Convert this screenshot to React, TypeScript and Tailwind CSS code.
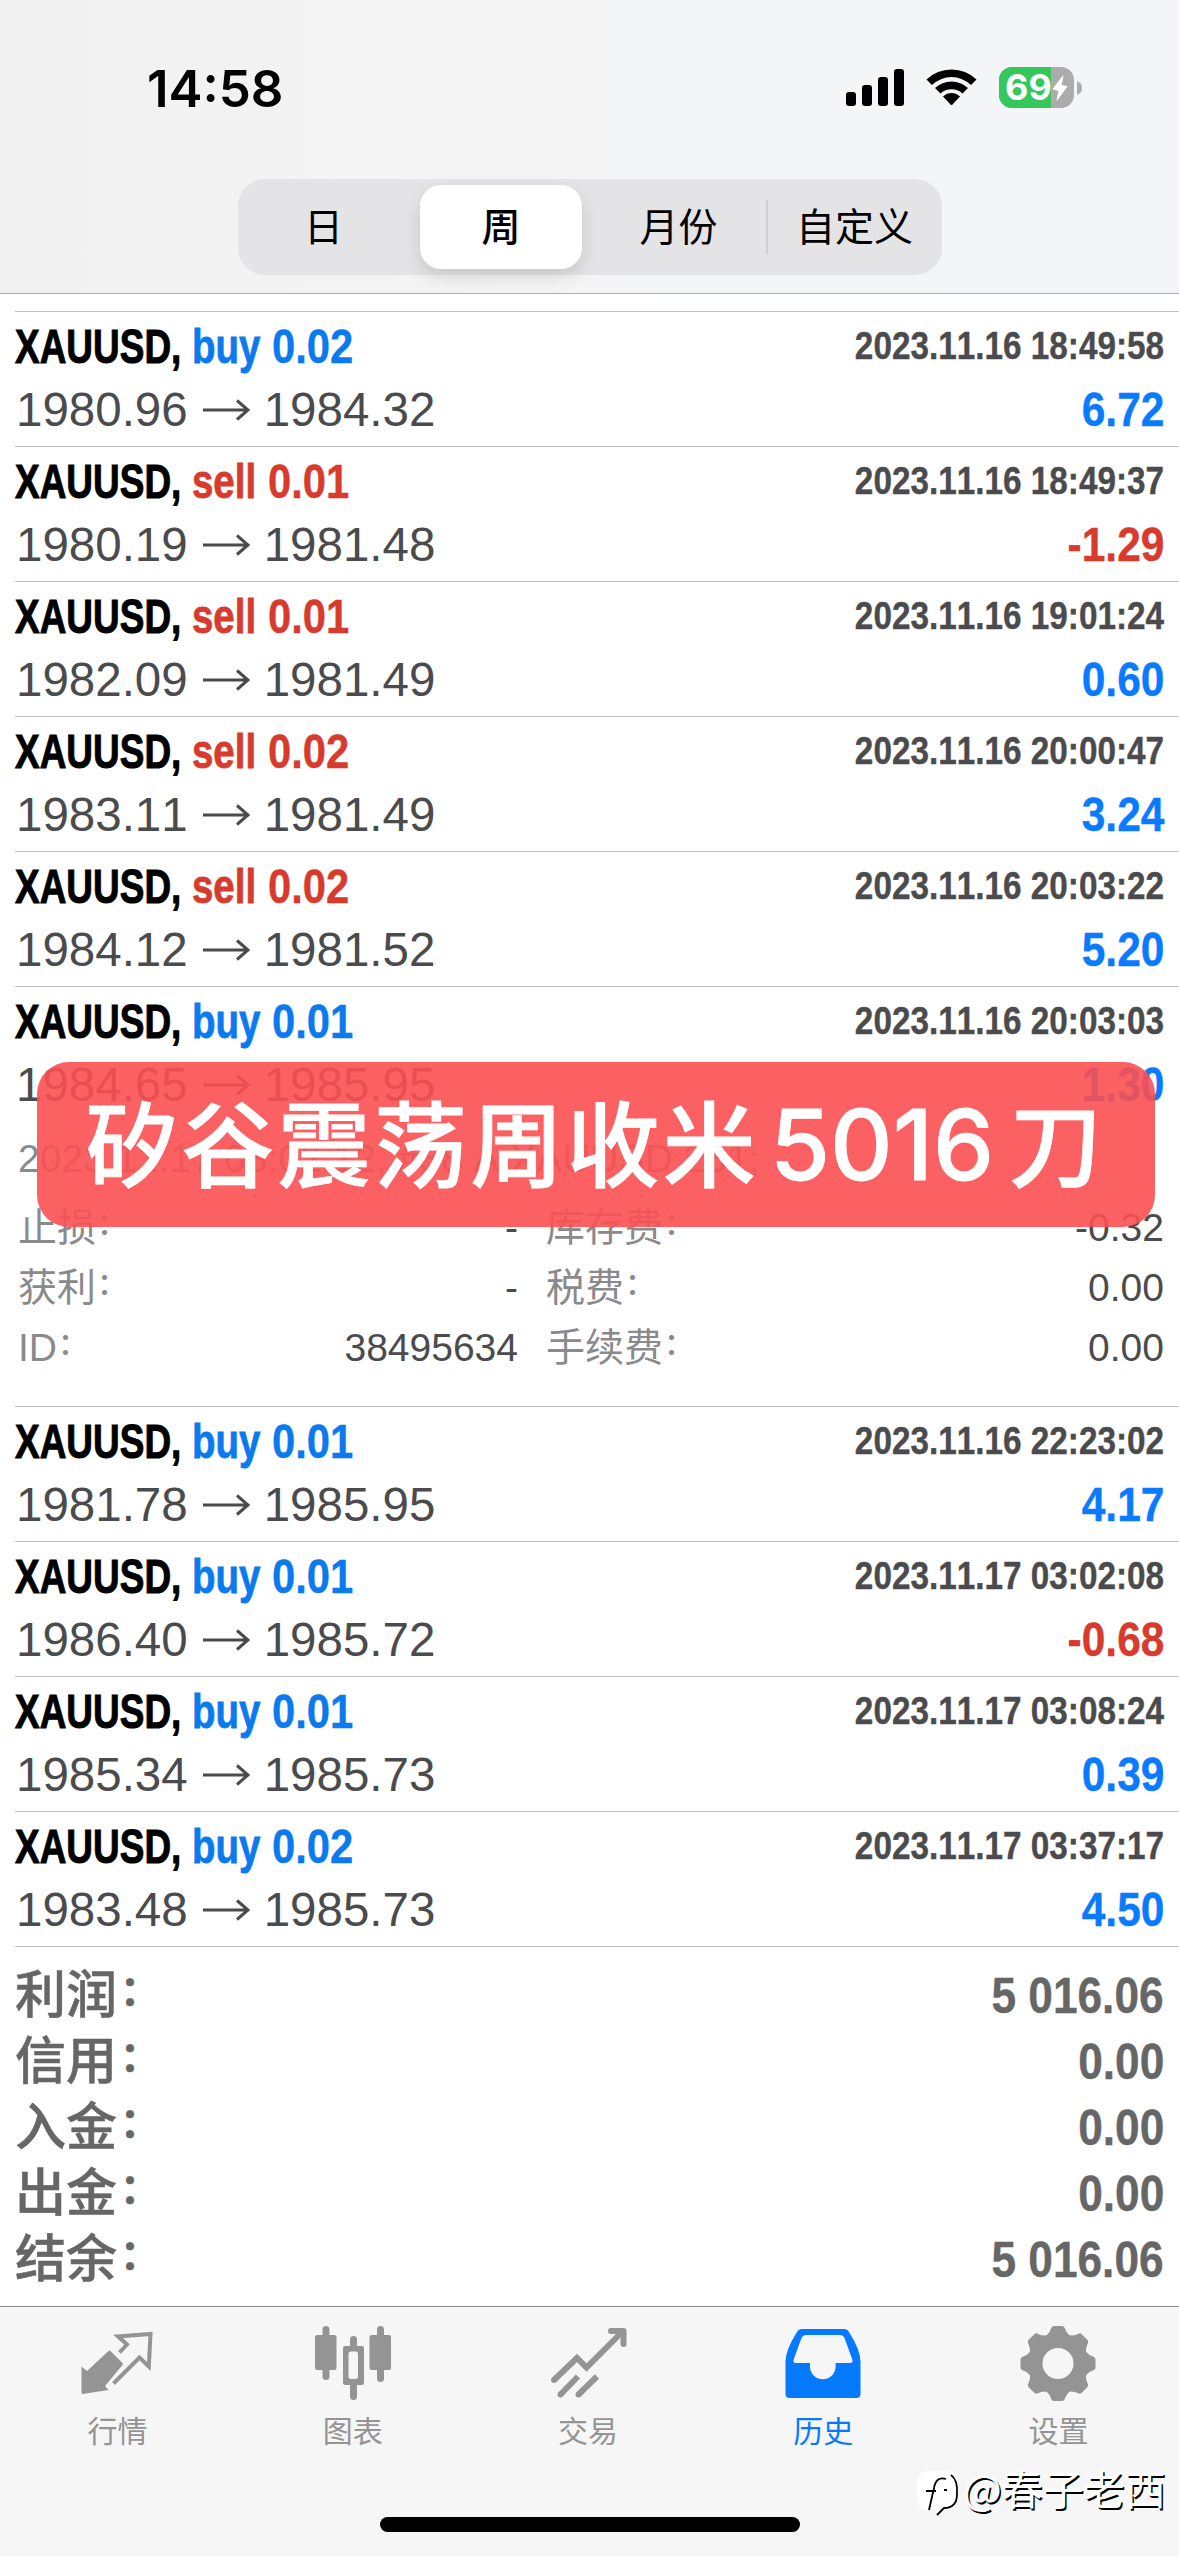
import { ReactNode } from 'react'
import clsx from 'clsx'

type Deal = {
  side: 'buy' | 'sell'
  lot: string
  open: string
  close: string
  time: string
  profit: string
}

const DEALS: Deal[] = [
  { side: 'buy',  lot: '0.02', open: '1980.96', close: '1984.32', time: '2023.11.16 18:49:58', profit: '6.72' },
  { side: 'sell', lot: '0.01', open: '1980.19', close: '1981.48', time: '2023.11.16 18:49:37', profit: '-1.29' },
  { side: 'sell', lot: '0.01', open: '1982.09', close: '1981.49', time: '2023.11.16 19:01:24', profit: '0.60' },
  { side: 'sell', lot: '0.02', open: '1983.11', close: '1981.49', time: '2023.11.16 20:00:47', profit: '3.24' },
  { side: 'sell', lot: '0.02', open: '1984.12', close: '1981.52', time: '2023.11.16 20:03:22', profit: '5.20' },
]

const OPENED: Deal = { side: 'buy', lot: '0.01', open: '1984.65', close: '1985.95', time: '2023.11.16 20:03:03', profit: '1.30' }

const LATER: Deal[] = [
  { side: 'buy', lot: '0.01', open: '1981.78', close: '1985.95', time: '2023.11.16 22:23:02', profit: '4.17' },
  { side: 'buy', lot: '0.01', open: '1986.40', close: '1985.72', time: '2023.11.17 03:02:08', profit: '-0.68' },
  { side: 'buy', lot: '0.01', open: '1985.34', close: '1985.73', time: '2023.11.17 03:08:24', profit: '0.39' },
  { side: 'buy', lot: '0.02', open: '1983.48', close: '1985.73', time: '2023.11.17 03:37:17', profit: '4.50' },
]

const DETAILS = [
  ['止损', '-', '库存费', '-0.32'],
  ['获利', '-', '税费', '0.00'],
  ['ID', '38495634', '手续费', '0.00'],
]

const TOTALS = [
  ['利润', '5 016.06'],
  ['信用', '0.00'],
  ['入金', '0.00'],
  ['出金', '0.00'],
  ['结余', '5 016.06'],
]

function StatusBar() {
  return (
    <div className="flex h-[179px] pt-[62px] pl-[147px] pr-[97px] justify-between">
      <span className="font-['Inter'] font-semibold text-[51px] leading-[53px] text-black">14:58</span>
      <div className="flex items-start pt-[5px]">
        <svg viewBox="0 0 60 42" className="w-[60px] h-[42px] mt-px fill-black">
          <rect x="0" y="24" width="10" height="14" rx="3" />
          <rect x="16" y="17" width="10" height="21" rx="3" />
          <rect x="32" y="9" width="10" height="29" rx="3" />
          <rect x="48" y="1" width="10" height="37" rx="3" />
        </svg>
        <svg viewBox="0 0 52 40" className="w-[52px] h-[40px] ml-5 mt-px">
          <path d="M0.5 11.5 A36 36 0 0 1 50.5 11.5 L45 17 A28 28 0 0 0 6 17 Z" fill="#000" />
          <path d="M9 20 A24 24 0 0 1 42 20 L36.500 25.500 A16.500 16.500 0 0 0 14.500 25.500 Z" fill="#000" />
          <path d="M17.500 28.500 A12 12 0 0 1 33.500 28.500 L25.500 37 Z" fill="#000" stroke="#000" strokeWidth="1" strokeLinejoin="round" />
        </svg>
        <div className="relative ml-[21px] w-[75px] h-[41px] rounded-[13px] bg-[#acacac]">
          <div className="w-[52px] h-full pl-[6px] rounded-l-[13px] bg-[#34c759] font-['Inter'] font-bold text-[36px] leading-[41px] text-white">69</div>
          <svg viewBox="0 0 16 26" className="absolute left-[53px] top-[8px] w-[16px] h-[26px]">
            <path d="M11 1 L1 14 L7 15.500 L5 25 L15 11.500 L9 10.500 Z" fill="#fff" stroke="#fff" strokeLinejoin="round" />
          </svg>
        </div>
        <svg viewBox="0 0 5 14" className="w-[5px] h-[14px] ml-[3px] mt-[14px]">
          <path d="M0 0 Q5 2 5 7 Q5 12 0 14 Z" fill="#acacac" />
        </svg>
      </div>
    </div>
  )
}

function Segments() {
  return (
    <div className="flex mx-auto w-[704px] h-[96px] rounded-[27px] bg-[#e4e4e6] text-[39px] text-black font-['Noto_Sans_CJK_SC',sans-serif]">
      <div className="w-[176px] flex items-center justify-center pr-1 pb-[5px]">日</div>
      <div className="w-[176px] flex items-center justify-center">
        <div className="flex items-center justify-center -ml-px w-[162px] h-[84px] pb-[5px] rounded-[21px] bg-white font-medium shadow-[0_8px_18px_rgba(0,0,0,0.12)]">周</div>
      </div>
      <div className="w-[176px] flex items-center justify-center pb-[5px] pl-[2px]">月份</div>
      <div className="w-[2px] h-[54px] mt-[21px] bg-[#d0d0d3]" />
      <div className="w-[174px] flex items-center justify-center pb-[5px]">自定义</div>
    </div>
  )
}

function Arrow() {
  return (
    <svg viewBox="0 0 48 24" className="w-[48px] h-[24px] ml-[14px] mr-[14px]" fill="none" stroke="#4b4b4d" strokeWidth="3">
      <path d="M1 12 H46 M35 2.500 L46 12 L35 21.500" />
    </svg>
  )
}

function DealHead({ d }: { d: Deal }) {
  return (
    <div className="h-[134px] pt-[11px] pr-[15px]">
      <div className="flex justify-between h-[48px] leading-[48px]">
        <div className="flex text-[48px] font-bold whitespace-pre">
          <span className="w-[177px]">
            <span className="inline-block origin-left scale-x-[0.77] text-black [-webkit-text-stroke:1px]">XAUUSD,</span>
          </span>
          <span className={clsx('flex', d.side === 'buy' ? 'text-[#0a7aee]' : 'text-[#d83b2d]')}>
            <span className={d.side === 'buy' ? 'w-[80px]' : 'w-[76px]'}>
              <span className="inline-block origin-left scale-x-[0.8] [-webkit-text-stroke:0.8px]">{d.side}</span>
            </span>
            <span className="inline-block origin-left scale-x-[0.87] [-webkit-text-stroke:0.4px]">{d.lot}</span>
          </span>
        </div>
        <span className="inline-block origin-right scale-x-[0.854] text-[39px] font-bold leading-[46px] text-[#4b4b4d] [-webkit-text-stroke:0.4px]">{d.time}</span>
      </div>
      <div className="flex justify-between items-center mt-[15px] h-[48px] leading-[48px]">
        <div className="flex items-center pl-px text-[47.5px] text-[#4b4b4d]">
          <span>{d.open}</span>
          <Arrow />
          <span>{d.close}</span>
        </div>
        <span className={clsx('inline-block origin-right scale-x-[0.885] text-[48px] font-bold [-webkit-text-stroke:0.4px]', d.profit[0] === '-' ? 'text-[#d83b2d]' : 'text-[#0a7aff]')}>
          {d.profit}
        </span>
      </div>
    </div>
  )
}

function Row({ d, children }: { d: Deal; children?: ReactNode }) {
  return (
    <div className="border-t border-[#bfc1c3]">
      <DealHead d={d} />
      {children}
    </div>
  )
}

function Label({ children }: { children: ReactNode }) {
  return (
    <span className="flex text-[#8a8a8c]">
      {children}
      <span className="relative left-px -top-[4px] text-[30px] font-medium">：</span>
    </span>
  )
}

function Details() {
  return (
    <div className="h-[285px] pt-[8px] text-[39px] leading-[60px]">
      <div className="h-[69px] pl-[3px] text-[#8a8a8c] whitespace-pre">2023.11.17 03:02:12, #38 A XAUUSD.231;</div>
      {DETAILS.map(([a, av, b, bv]) => (
        <div key={b} className="flex h-[60px] pl-[3px] pr-[15px] text-[#4b4b4d]">
          <div className="flex justify-between w-[500px]">
            <Label>{a}</Label>
            <span>{av}</span>
          </div>
          <div className="flex flex-1 justify-between pl-[28px]">
            <Label>{b}</Label>
            <span>{bv}</span>
          </div>
        </div>
      ))}
    </div>
  )
}

const TEETH = [0, 45, 90, 135, 180, 225, 270, 315]

const TABS: { label: string; active?: boolean; icon: ReactNode }[] = [
  {
    label: '行情',
    icon: (
      <g transform="translate(-8.5 0)">
        <path d="M60 42.500 L67.500 34.500 L58.500 26.500 L91 24 L89.300 56.500 L80 47.500 L54 73.500" fill="none" stroke="currentColor" strokeWidth="4" />
        <path d="M22 56.500 L27.500 61 L49 41 Q50 40 51 41 L63 53 Q64 54 63 55 L45.500 76 L49 80 L23 84 Q22 84 22 83 Z" fill="currentColor" />
      </g>
    ),
  },
  {
    label: '图表',
    icon: (
      <g fill="currentColor">
        <rect x="12" y="25" width="21.500" height="35" rx="2" />
        <rect x="19.500" y="16" width="7" height="54" rx="3.500" />
        <rect x="66.500" y="25" width="21.500" height="35" rx="2" />
        <rect x="74" y="16" width="7" height="56" rx="3.500" />
        <rect x="47" y="26" width="7" height="12" rx="3.500" />
        <rect x="47" y="73" width="7" height="17" rx="3.500" />
        <path fillRule="evenodd" d="M42 36 H59 Q61 36 61 38 V73 Q61 75 59 75 H42 Q40 75 40 73 V38 Q40 36 42 36 Z M48 41.500 Q45.500 41.500 45.500 44 V66.500 Q45.500 69 48 69 H52.500 Q55 69 55 66.500 V44 Q55 41.500 52.500 41.500 Z" />
      </g>
    ),
  },
  {
    label: '交易',
    icon: (
      <g fill="none" stroke="currentColor" strokeWidth="6" transform="translate(0 -10)">
        <path d="M16 80 L39 58 L48.500 67.500 L85 31" strokeLinejoin="miter" />
        <path d="M73 31 H85.500 V44" strokeLinecap="round" strokeLinejoin="round" />
        <path d="M40 76.500 L22.500 94.500" />
        <path d="M59 76.500 L40.500 94.500" />
        <g fill="currentColor" stroke="none">
          <circle cx="16" cy="80" r="3" />
          <circle cx="22.500" cy="94.500" r="3" />
          <circle cx="40.500" cy="94.500" r="3" />
        </g>
      </g>
    ),
  },
  {
    label: '历史',
    active: true,
    icon: (
      <path
        fill="currentColor"
        fillRule="evenodd"
        d="M29 19 H71 Q74.500 19 76 22 Q87.500 40 87.500 52 V84 Q87.500 88 83.500 88 H16.500 Q12.500 88 12.500 84 V52 Q12.500 40 24 22 Q25.500 19 29 19 Z M33 25 Q30 25 28.500 28 L20.500 50 Q20 53 23 53 H37 V56.500 A12.800 12.800 0 0 0 62.600 56.500 V53 H77 Q80 53 79.500 50 L71.500 28 Q70 25 67 25 Z"
      />
    ),
  },
  {
    label: '设置',
    icon: (
      <g fill="currentColor" transform="translate(50 53.500)">
        <circle r="23" fill="none" stroke="currentColor" strokeWidth="15" />
        {TEETH.map(a => (
          <path key={a} transform={`rotate(${a})`} d="M-11.500 -28 Q-8 -31 -6.500 -36 Q-5.500 -37.500 -4 -37.500 H4 Q5.500 -37.500 6.500 -36 Q8 -31 11.500 -28 Z" />
        ))}
      </g>
    ),
  },
]

function TabBar() {
  return (
    <div className="flex h-[250px] border-t border-[#88898b] bg-[#f6f6f6] pt-[3px] pr-[3px]">
      {TABS.map(t => (
        <div key={t.label} className={clsx('flex-1 flex flex-col items-center', t.active ? 'text-[#067aff]' : 'text-[#949494]')}>
          <svg viewBox="0 0 100 100" className="w-[100px] h-[100px]">{t.icon}</svg>
          <span className="mt-px h-[36px] text-[30px] leading-[36px] font-['Noto_Sans_CJK_SC',sans-serif]">{t.label}</span>
        </div>
      ))}
    </div>
  )
}

export default function App() {
  return (
    <div className="relative w-[1179px] h-[2556px] overflow-hidden bg-white [font-kerning:none] font-['Liberation_Sans','Noto_Sans_CJK_SC',sans-serif]">
      <div className="h-[294px] border-b border-[#a9acb0] bg-linear-to-r from-[#f1f1f2] via-[#f5f5f6] to-[#f3f5f9]">
        <StatusBar />
        <Segments />
      </div>

      {/* History list */}
      <div className="pt-[17px] pl-[15px] h-[2012px]">
        {DEALS.map(d => <Row key={d.time} d={d} />)}
        <Row d={OPENED}>
          <Details />
        </Row>
        {LATER.map(d => <Row key={d.time} d={d} />)}
        <div className="border-t border-[#bfc1c3] pt-[16px] pr-[15px]">
          {TOTALS.map(([k, v]) => (
            <div key={k} className="flex justify-between h-[66px] leading-[66px] text-[51px] text-[#666]">
              <span className="flex font-medium [-webkit-text-stroke:0.5px]">
                {k}
                <span className="relative left-[3px] -top-[5px] text-[40px] font-bold">：</span>
              </span>
              <span className="inline-block origin-right scale-x-[0.885] text-[50px] font-bold [-webkit-text-stroke:0.4px]">{v}</span>
            </div>
          ))}
        </div>
      </div>

      <TabBar />

      {/* Caption over the list */}
      <div className="absolute left-[37px] top-[1062px] w-[1118px] h-[165px] rounded-[32px] bg-[rgba(251,80,82,0.9)] flex pl-[48px] text-white font-medium text-[93px] leading-[156px] whitespace-nowrap font-['Noto_Sans_CJK_SC',sans-serif] [-webkit-text-stroke:0.8px]">
        <span className="tracking-[3.3px]">矽谷震荡周收米</span>
        <span className="ml-[11px] w-[239px] font-['Inter'] text-[97px] leading-[166px]">5016</span>
        <span>刀</span>
      </div>

      {/* Home indicator */}
      <div className="absolute left-[380px] top-[2517px] w-[420px] h-[15px] rounded-full bg-black" />

      {/* Watermark */}
      <div className="absolute left-[916px] top-[2466px] flex h-[52px] text-white">
        <svg viewBox="0 0 44 52" className="w-[44px] h-[52px]">
          <path d="M12 5 H30 Q42 5 42 19 V29 Q42 41 29 42 L22 49 L20 44 H12 Q1 44 1 30 V19 Q1 5 12 5 Z" fill="#fff" />
          <path d="M30 13 Q20 10 18 22 L13 44 M10 25 H20 M28 24 H31 M35 9 Q42 14 41 28 Q41 42 28 42 L21 49" fill="none" stroke="#000" strokeWidth="1.800" />
        </svg>
        <span className="ml-[3px] text-[41px] leading-[42px] whitespace-nowrap [text-shadow:1.5px_1.5px_0.5px_#000] font-['Noto_Sans_CJK_SC',sans-serif]">@春子老西</span>
      </div>
    </div>
  )
}
